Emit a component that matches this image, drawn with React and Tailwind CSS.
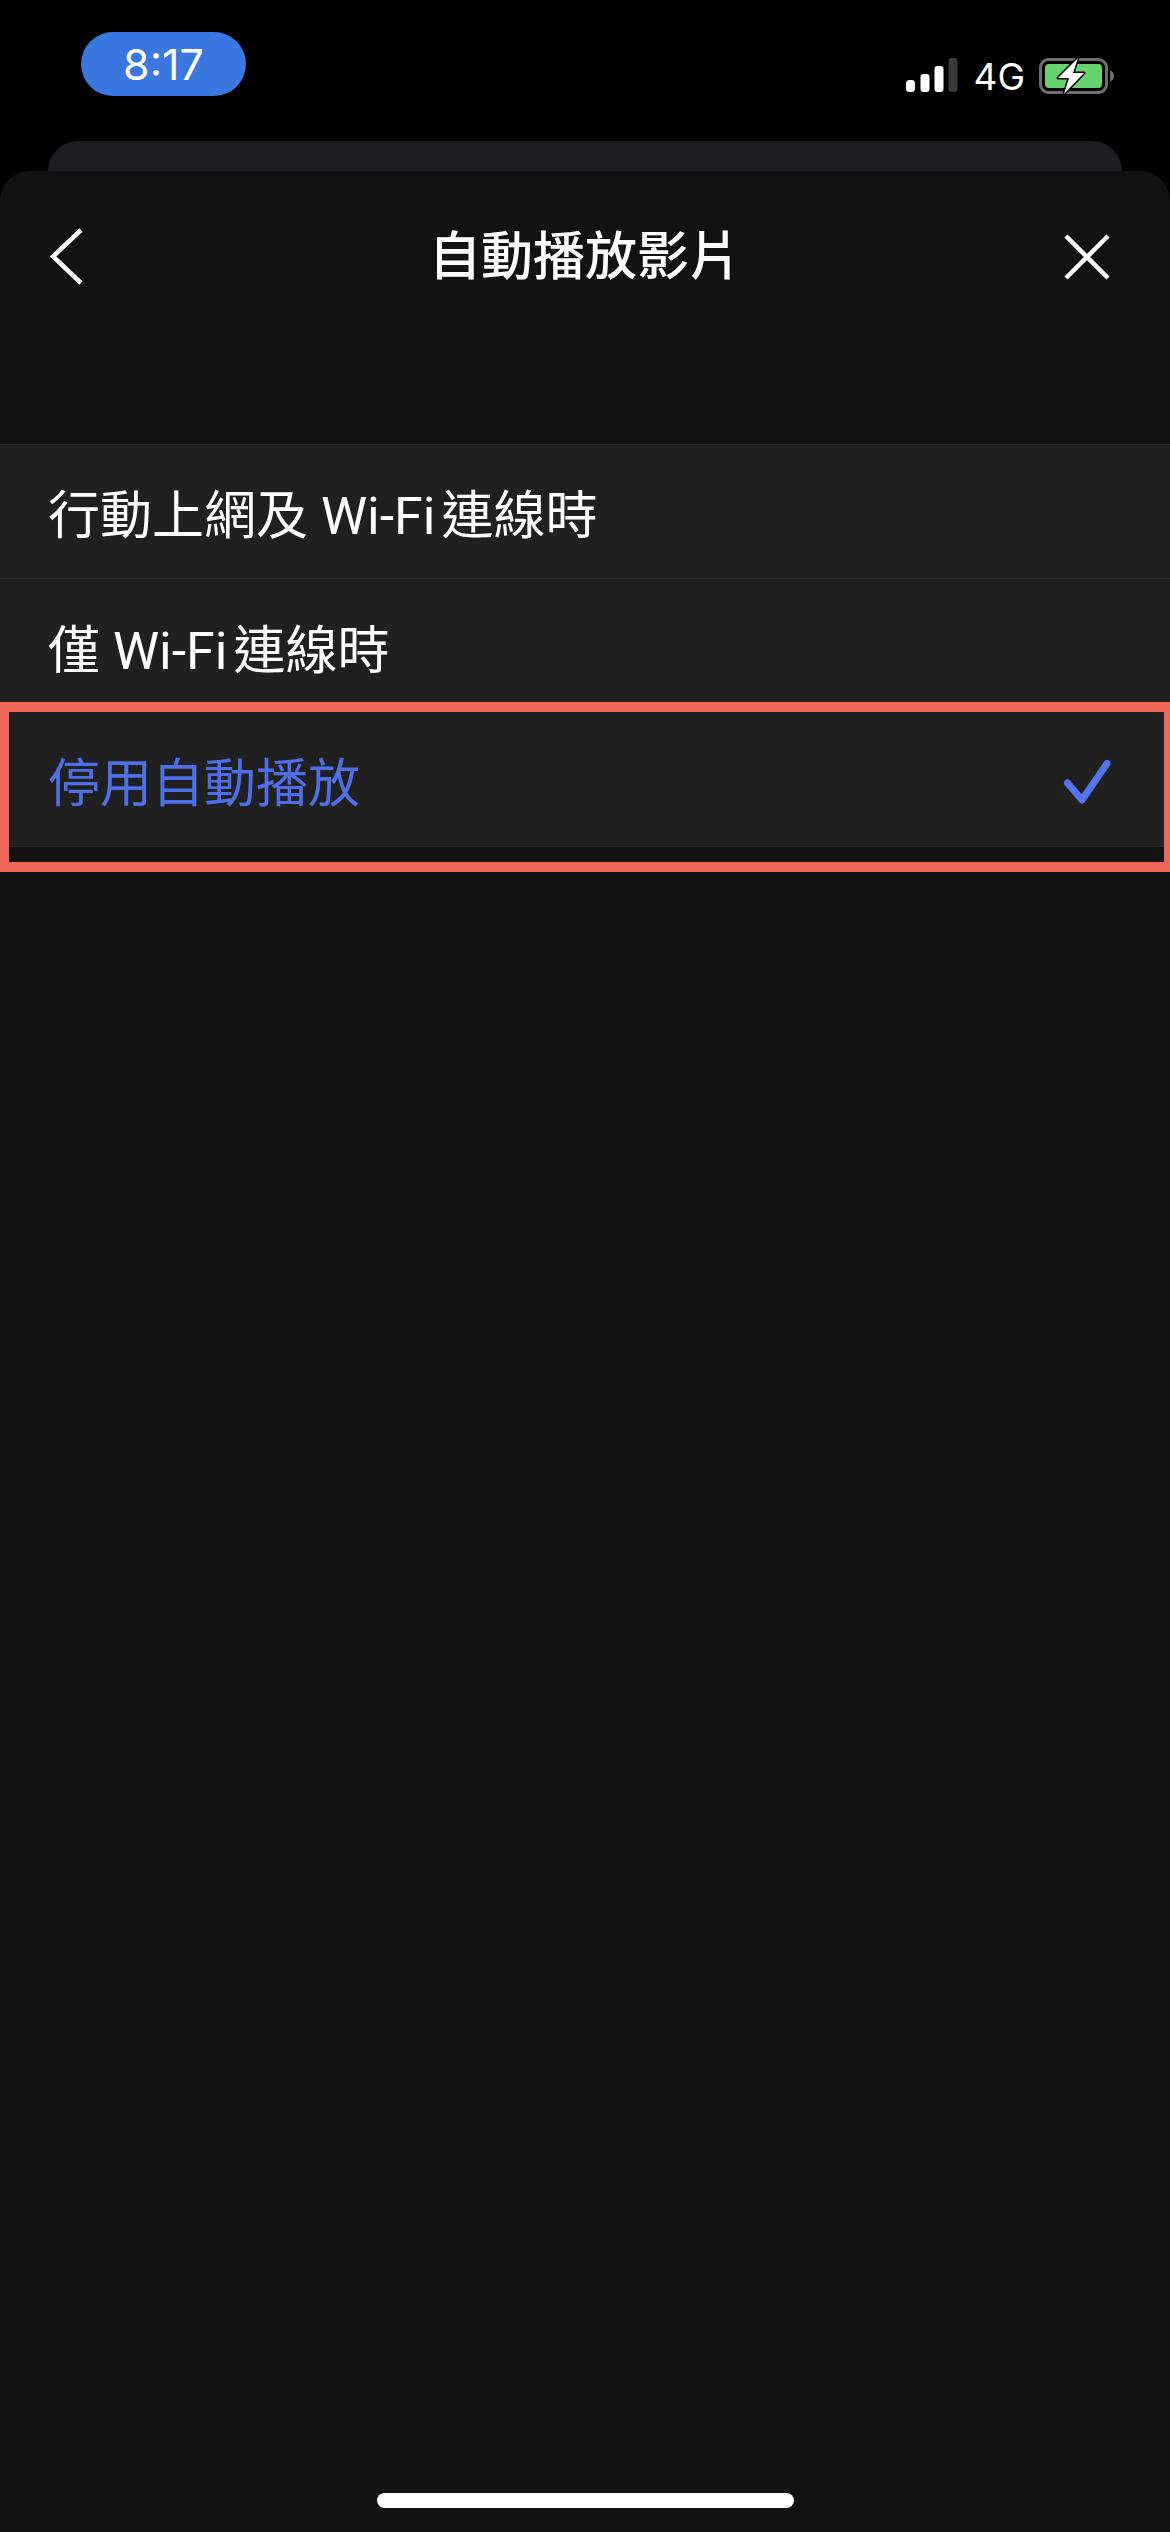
import React from 'react';

const FONT = 'font-["Inter","Noto_Sans_CJK_TC","Noto_Sans",sans-serif]';

function Signal() {
  return (
    <svg width="52" height="36" viewBox="0 0 52 36">
      <rect x="0" y="22" width="9" height="12" rx="3.5" fill="#fff" />
      <rect x="14.5" y="16" width="9" height="18" rx="3" fill="#fff" />
      <rect x="28.5" y="8" width="9" height="26" rx="3" fill="#fff" />
      <rect x="42.5" y="0" width="9" height="34" rx="3" fill="#3a3a3a" />
    </svg>
  );
}

function Battery() {
  return (
    <svg width="76" height="38" viewBox="0 0 76 38">
      <rect x="1.5" y="2.5" width="66" height="33" rx="8" fill="none" stroke="#6e6e6e" strokeWidth="3" />
      <rect x="6" y="7" width="57" height="24" rx="4" fill="#66d36e" />
      <path d="M71 13.5c2.500 .8 4 3 4 5.500s-1.500 4.700-4 5.500z" fill="#6e6e6e" />
      <path d="M39 1 19 21h11l-5 16 20-21H34z" fill="#fff" stroke="#000" strokeWidth="3" strokeLinejoin="round" paintOrder="stroke" />
    </svg>
  );
}

function Row({ children, active, divider }) {
  return (
    <div className={`flex h-[134px] items-center justify-between pl-[48px] pt-[11px] ${divider ? 'border-b border-[#2a2a2a]' : ''}`}>
      <span className={`font-["Roboto","Noto_Sans_CJK_TC",sans-serif] text-[52px] leading-none font-normal ${active ? 'text-[#4f6fe8]' : 'text-white'}`}>{children}</span>
      {active && (
        <svg className="mr-[56px] -translate-y-[3px]" width="52" height="48" viewBox="0 0 52 48" fill="none">
          <path d="M4.500 22 19 39 44 2.500" transform="translate(1 3)" stroke="#5474f0" strokeWidth="7" strokeLinecap="round" strokeLinejoin="round" />
        </svg>
      )}
    </div>
  );
}

function WiFi() {
  return <span className="mr-[6px]">Wi-Fi</span>;
}

export default function App() {
  return (
    <div className={`relative flex h-[2532px] w-[1170px] flex-col overflow-hidden bg-black ${FONT}`}>
      {/* status bar */}
      <div className="flex h-[141px] items-start pt-[32px] pl-[81px] pr-[55px]">
        <div className="flex h-[64px] w-[165px] items-center justify-center rounded-[32px] bg-[#3878e0] text-[43px] font-normal text-white">
          8:17
        </div>
        <div className="ml-auto mt-[25px] flex items-center">
          <Signal />
          <span className="ml-[15px] text-[37px] leading-none text-white">4G</span>
          <div className="ml-[14px]">
            <Battery />
          </div>
        </div>
      </div>

      <div className="mx-[48px] h-[30px] shrink-0 rounded-t-[30px] bg-[#1e1e20]" />

      {/* sheet */}
      <div className="flex flex-1 flex-col rounded-t-[30px] bg-[#121212]">
        <div className="grid h-[171px] shrink-0 grid-cols-[1fr_auto_1fr] items-center">
          <svg className="ml-[48px]" width="36" height="58" viewBox="0 0 36 58" fill="none">
            <path d="M33 2 5 28.500 33 55" stroke="#fff" strokeWidth="4.500" />
          </svg>
          <div className="text-[52px] leading-none font-medium text-white">自動播放影片</div>
          <svg className="mr-[60px] justify-self-end" width="46" height="46" viewBox="0 0 46 46" fill="none">
            <path d="M2 2l42 42M44 2 2 44" stroke="#fff" strokeWidth="4.500" />
          </svg>
        </div>

        <div className="mt-[102px] border-t border-[#2a2a2a] bg-[#202020]">
          <Row divider>行動上網及 <WiFi />連線時</Row>
          <Row>僅 <WiFi />連線時</Row>
          <Row active divider>停用自動播放</Row>
        </div>

        <div className="mt-auto mb-[24px] h-[15px] w-[417px] self-center rounded-[8px] bg-white" />
      </div>

      {/* red annotation over the selected row */}
      <div className="absolute top-[702px] left-0 h-[170px] w-[1170px] border-y-[10px] border-r-[6px] border-l-[9px] border-[#ee6759]" />
    </div>
  );
}
